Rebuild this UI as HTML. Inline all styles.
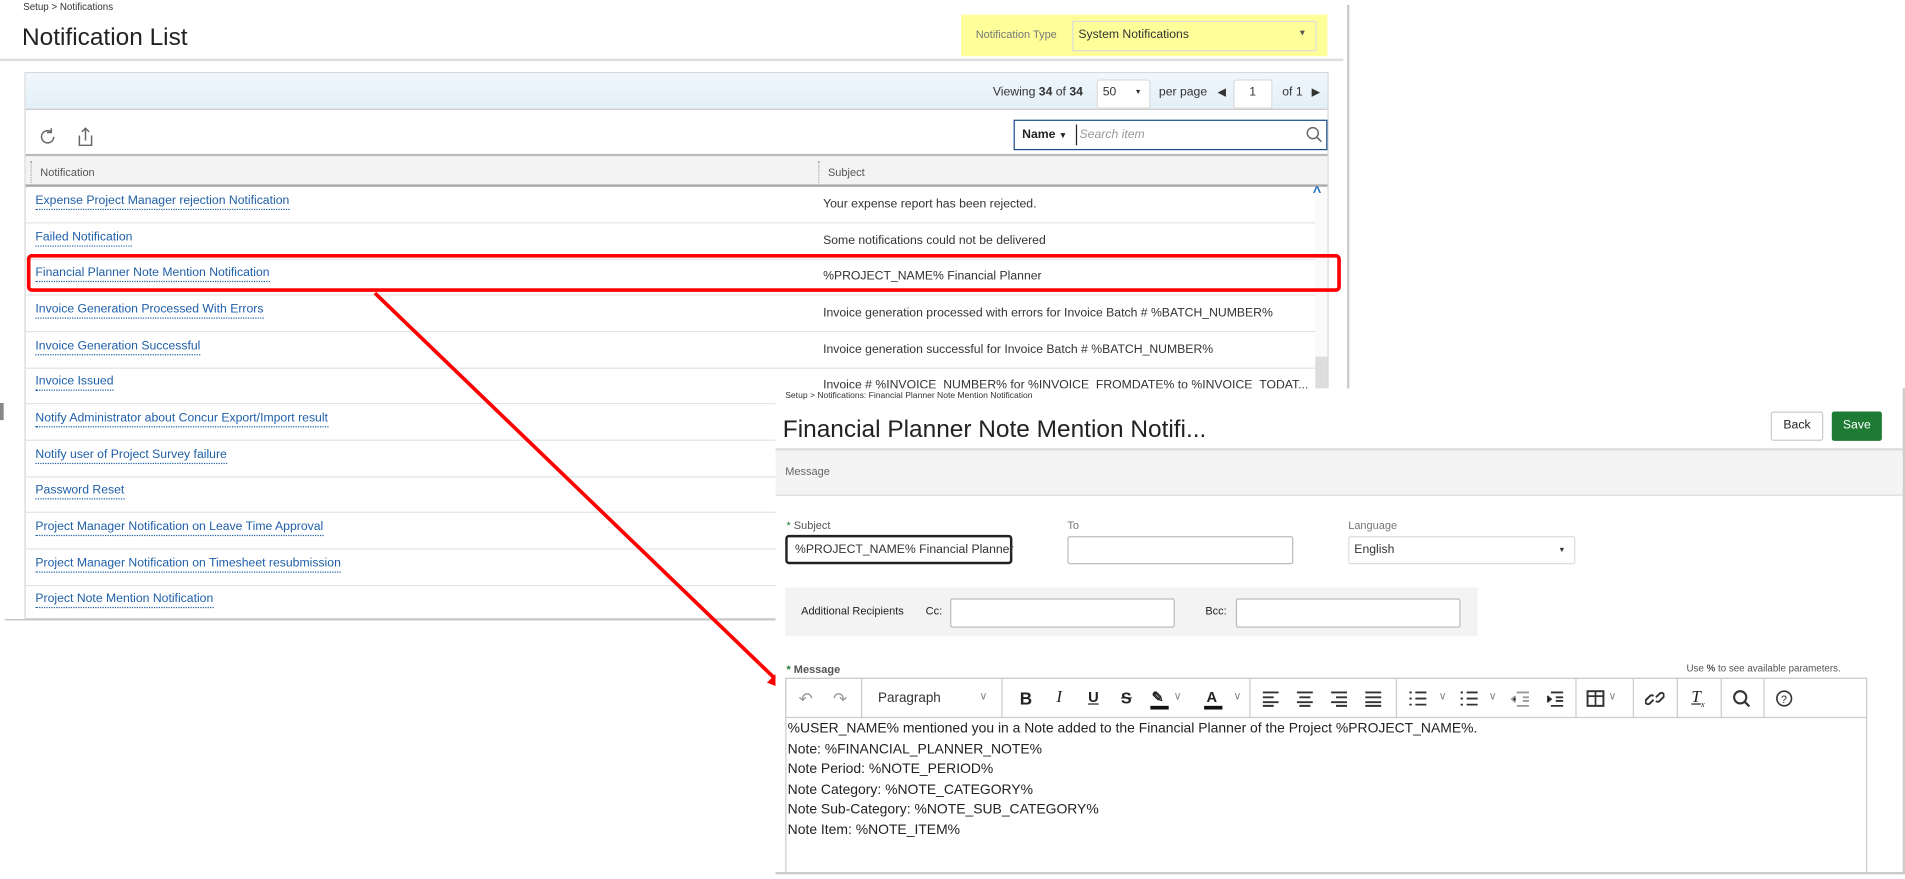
<!DOCTYPE html>
<html><head><meta charset="utf-8"><style>
*{box-sizing:border-box;margin:0;padding:0}
html,body{width:1905px;height:879px;overflow:hidden;background:#fff}
#w{position:absolute;left:0;top:0;width:1560px;height:720px;transform:scale(1.2212);transform-origin:0 0;font-family:"Liberation Sans",sans-serif;color:#333}
.a{position:absolute}
.lnk{color:#1f5fa8;font-size:10px;border-bottom:1px dotted #1f5fa8;line-height:12px}
.sub{font-size:10px;color:#333}
.row{position:absolute;left:21px;width:1056px;height:30px;border-bottom:1px solid #e3e3e3}
.inp{position:absolute;background:#fff;border:1px solid #bbb;border-radius:2px}
.sep{position:absolute;top:0;width:1px;height:32px;background:#ccc}
.tb{position:absolute;top:8px;font-size:14px;color:#222;font-weight:bold}
.chev{position:absolute;top:9px;font-size:9px;color:#888}
.txt{font-family:"Liberation Sans",Arial,sans-serif;font-size:11.4px;color:#222;line-height:16.5px}
</style></head><body><div id="w">
<div class="a" style="left:19px;top:1px;font-size:8px;color:#333">Setup &gt; Notifications</div>
<div class="a" style="left:18px;top:20px;font-size:20px;color:#222">Notification List</div>
<div class="a" style="left:0;top:48px;width:1100px;height:2px;background:#ddd"></div>
<div class="a" style="left:1103px;top:4px;width:2px;height:505px;background:#ccc"></div>
<div class="a" style="left:4px;top:507px;width:1100px;height:1px;background:#bbb"></div>
<div class="a" style="left:787px;top:12px;width:300px;height:34px;background:#ffff99"></div>
<div class="a" style="left:799px;top:23px;font-size:9px;color:#777">Notification Type</div>
<div class="a" style="left:878px;top:17px;width:200px;height:25px;border:1px solid #ddd;background:#ffff99"></div>
<div class="a" style="left:883px;top:23px;font-size:10px;color:#333">System Notifications</div>
<div class="a" style="left:1063px;top:24px;font-size:7px;color:#555">▼</div>

<div class="a" style="left:20px;top:59px;width:1068px;height:448px;border:1px solid #d6d6d6"></div>
<div class="a" style="left:21px;top:60px;width:1066px;height:30px;background:linear-gradient(#f0f7fc,#e3eff8);border-bottom:1px solid #c8c8c8"></div>
<div class="a" style="left:813px;top:70px;font-size:10px;color:#333">Viewing <b>34</b> of <b>34</b></div>
<div class="inp" style="left:898px;top:65px;width:44px;height:24px;border-color:#ddd"></div>
<div class="a" style="left:903px;top:70px;font-size:10px">50</div>
<div class="a" style="left:929px;top:73px;font-size:6px">▼</div>
<div class="a" style="left:949px;top:70px;font-size:10px">per page</div>
<div class="a" style="left:997px;top:70px;font-size:9px">◀</div>
<div class="inp" style="left:1010px;top:65px;width:32px;height:24px;border-color:#ddd"></div>
<div class="a" style="left:1023px;top:70px;font-size:10px">1</div>
<div class="a" style="left:1050px;top:70px;font-size:10px">of 1</div>
<div class="a" style="left:1074px;top:70px;font-size:9px">▶</div>
<div class="a" style="left:21px;top:90px;width:1066px;height:38px;border-bottom:2px solid #bbb"></div>
<svg class="a" style="left:31px;top:104px" width="16" height="16" viewBox="0 0 16 16"><path d="M13 8a5 5 0 1 1-2-4" fill="none" stroke="#666" stroke-width="1.2"/><path d="M11 1v3.5h-3.5" fill="none" stroke="#666" stroke-width="1.2"/></svg>
<svg class="a" style="left:62px;top:103px" width="16" height="18" viewBox="0 0 16 18"><path d="M8 12V2M5 5l3-3 3 3M3 8v8h10V8" fill="none" stroke="#666" stroke-width="1.2"/></svg>
<div class="a" style="left:830px;top:98px;width:257px;height:25px;border:1.5px solid #1a4c8c;background:#fff"></div>
<div class="a" style="left:837px;top:105px;font-size:10px;font-weight:bold;color:#222">Name <span style="font-size:7px">▼</span></div>
<div class="a" style="left:881px;top:102px;width:1px;height:17px;background:#222"></div>
<div class="a" style="left:884px;top:105px;font-size:10px;font-style:italic;color:#999">Search item</div>
<svg class="a" style="left:1069px;top:103px" width="14" height="14"><circle cx="6" cy="6" r="4.5" fill="none" stroke="#666" stroke-width="1.2"/><path d="M9.5 9.5L13 13" stroke="#666" stroke-width="1.3"/></svg>
<div class="a" style="left:21px;top:129px;width:1066px;height:24px;background:#f3f3f3;border-bottom:2px solid #aaa"></div>
<div class="a" style="left:25px;top:132px;width:1px;height:18px;border-left:1px dotted #aaa"></div>
<div class="a" style="left:33px;top:136px;font-size:9px;color:#555">Notification</div>
<div class="a" style="left:670px;top:132px;width:1px;height:18px;border-left:1px dotted #aaa"></div>
<div class="a" style="left:678px;top:136px;font-size:9px;color:#555">Subject</div>

<div class="row" style="top:153px"><span class="a lnk" style="left:8px;top:6px">Expense Project Manager rejection Notification</span><span class="a sub" style="left:653px;top:9px">Your expense report has been rejected.</span></div>
<div class="row" style="top:183px"><span class="a lnk" style="left:8px;top:6px">Failed Notification</span><span class="a sub" style="left:653px;top:9px">Some notifications could not be delivered</span></div>
<div class="row" style="top:212px"><span class="a lnk" style="left:8px;top:6px">Financial Planner Note Mention Notification</span><span class="a sub" style="left:653px;top:9px">%PROJECT_NAME% Financial Planner</span></div>
<div class="row" style="top:242px"><span class="a lnk" style="left:8px;top:6px">Invoice Generation Processed With Errors</span><span class="a sub" style="left:653px;top:9px">Invoice generation processed with errors for Invoice Batch # %BATCH_NUMBER%</span></div>
<div class="row" style="top:272px"><span class="a lnk" style="left:8px;top:6px">Invoice Generation Successful</span><span class="a sub" style="left:653px;top:9px">Invoice generation successful for Invoice Batch # %BATCH_NUMBER%</span></div>
<div class="row" style="top:301px"><span class="a lnk" style="left:8px;top:6px">Invoice Issued</span><span class="a sub" style="left:653px;top:9px">Invoice # %INVOICE_NUMBER% for %INVOICE_FROMDATE% to %INVOICE_TODAT...</span></div>
<div class="row" style="top:331px"><span class="a lnk" style="left:8px;top:6px">Notify Administrator about Concur Export/Import result</span></div>
<div class="row" style="top:361px"><span class="a lnk" style="left:8px;top:6px">Notify user of Project Survey failure</span></div>
<div class="row" style="top:390px"><span class="a lnk" style="left:8px;top:6px">Password Reset</span></div>
<div class="row" style="top:420px"><span class="a lnk" style="left:8px;top:6px">Project Manager Notification on Leave Time Approval</span></div>
<div class="row" style="top:450px"><span class="a lnk" style="left:8px;top:6px">Project Manager Notification on Timesheet resubmission</span></div>
<div class="row" style="top:479px;border:none"><span class="a lnk" style="left:8px;top:6px">Project Note Mention Notification</span></div>
<div class="a" style="left:1077px;top:153px;width:10px;height:353px;background:#fafafa"></div>
<div class="a" style="left:1077px;top:292px;width:10px;height:30px;background:#ddd"></div>
<div class="a" style="left:1075px;top:150px;font-size:12px;color:#1f6fc0;font-weight:bold">^</div>
<div class="a" style="left:0;top:330px;width:3px;height:14px;background:#888"></div>

<div class="a" style="left:22px;top:208px;width:1076px;height:31px;border:3px solid #f00;border-radius:4px"></div>
<svg class="a" style="left:0;top:0" width="700" height="600"><line x1="307" y1="240" x2="636" y2="557" stroke="#f00" stroke-width="3"/><polygon points="646,566 628,559 638,549" fill="#f00"/></svg>

<div class="a" style="left:635px;top:318px;width:925px;height:398px;background:#fff;border-right:2px solid #ccc;border-bottom:2px solid #ccc"></div>
<div class="a" style="left:643px;top:321px;font-size:7px;color:#333">Setup &gt; Notifications: Financial Planner Note Mention Notification</div>
<div class="a" style="left:641px;top:341px;font-size:20px;color:#222">Financial Planner Note Mention Notifi...</div>
<div class="a" style="left:1450px;top:337px;width:43px;height:24px;border:1px solid #ccc;border-radius:2px;background:#fff;font-size:10px;text-align:center;line-height:22px;color:#222">Back</div>
<div class="a" style="left:1500px;top:337px;width:41px;height:24px;background:#1e7b34;border-radius:2px;font-size:10px;text-align:center;line-height:24px;color:#fff">Save</div>
<div class="a" style="left:635px;top:367px;width:923px;height:39px;background:#f4f4f4;border-top:2px solid #ddd;border-bottom:1px solid #ddd"></div>
<div class="a" style="left:643px;top:381px;font-size:9px;color:#666">Message</div>
<div class="a" style="left:644px;top:425px;font-size:9px;color:#555"><span style="color:#1e7b34">*</span> Subject</div>
<div class="a" style="left:643px;top:438px;width:186px;height:24px;border:2px solid #222;border-radius:3px"></div>
<div class="a" style="left:651px;top:445px;font-size:10px;color:#333">%PROJECT_NAME% Financial Planner</div>
<div class="a" style="left:874px;top:425px;font-size:9px;color:#777">To</div>
<div class="inp" style="left:874px;top:439px;width:185px;height:23px"></div>
<div class="a" style="left:1104px;top:425px;font-size:9px;color:#777">Language</div>
<div class="inp" style="left:1104px;top:439px;width:186px;height:23px;border-color:#ddd"></div>
<div class="a" style="left:1109px;top:445px;font-size:10px">English</div>
<div class="a" style="left:1276px;top:448px;font-size:6px">▼</div>
<div class="a" style="left:643px;top:481px;width:567px;height:40px;background:#f3f3f3"></div>
<div class="a" style="left:656px;top:495px;font-size:9px;color:#222">Additional Recipients</div>
<div class="a" style="left:758px;top:495px;font-size:9px;color:#222">Cc:</div>
<div class="inp" style="left:778px;top:490px;width:184px;height:24px"></div>
<div class="a" style="left:987px;top:495px;font-size:9px;color:#222">Bcc:</div>
<div class="inp" style="left:1012px;top:490px;width:184px;height:24px"></div>
<div class="a" style="left:644px;top:543px;font-size:9px;color:#555;font-weight:bold"><span style="color:#1e7b34">*</span> Message</div>
<div class="a" style="left:1381px;top:543px;font-size:8px;color:#555">Use <b>%</b> to see available parameters.</div>
<div class="a" style="left:643px;top:555px;width:886px;height:160px;border:1px solid #ccc;border-bottom:none"></div>
<div class="a" style="left:643px;top:555px;width:886px;height:33px;border:1px solid #ccc">
 <span class="tb" style="left:10px;color:#999;font-weight:normal">↶</span><span class="tb" style="left:38px;color:#999;font-weight:normal">↷</span>
 <div class="sep" style="left:61px"></div>
 <span class="a" style="left:75px;top:10px;font-size:11px;color:#333">Paragraph</span><span class="chev" style="left:158px">∨</span>
 <div class="sep" style="left:176px"></div>
 <span class="tb" style="left:191px">B</span><span class="tb" style="left:221px;font-style:italic;font-weight:normal;font-family:'Liberation Serif',serif">I</span><span class="tb" style="left:247px;text-decoration:underline;font-size:12px">U</span><span class="tb" style="left:274px;text-decoration:line-through;font-size:13px">S</span>
 <span class="tb" style="left:299px;font-size:12px">✎</span><div class="a" style="left:298px;top:22px;width:15px;height:3px;background:#111"></div><span class="chev" style="left:317px">∨</span>
 <span class="tb" style="left:344px;font-size:12px">A</span><div class="a" style="left:342px;top:22px;width:15px;height:3px;background:#111"></div><span class="chev" style="left:366px">∨</span>
 <div class="sep" style="left:379px"></div>
 <svg class="a" style="left:390px;top:9px" width="100" height="14"><g stroke="#333" stroke-width="1.6"><path d="M0 2h13M0 6h9M0 10h13M0 13h9"/><path d="M28 2h13M30 6h9M28 10h13M30 13h9"/><path d="M56 2h13M60 6h9M56 10h13M60 13h9"/><path d="M84 2h13M84 6h13M84 10h13M84 13h13"/></g></svg>
 <div class="sep" style="left:499px"></div>
 <svg class="a" style="left:510px;top:9px" width="130" height="14"><g stroke="#333" stroke-width="1.5"><path d="M0 2h2M5 2h9M0 7h2M5 7h9M0 12h2M5 12h9"/><path d="M42 2h2M47 2h9M42 7h2M47 7h9M42 12h2M47 12h9"/><path d="M88 2h10M93 6h5M93 9h5M88 13h10M87 5l-3 2.5 3 2.5" stroke="#999"/><path d="M116 2h10M120 6h6M120 9h6M116 13h10M113 5l3 2.5-3 2.5"/></g></svg>
 <span class="chev" style="left:534px">∨</span><span class="chev" style="left:575px">∨</span>
 <div class="sep" style="left:646px"></div>
 <svg class="a" style="left:655px;top:9px" width="15" height="14"><rect x="1" y="1" width="13" height="12" fill="none" stroke="#333" stroke-width="1.6"/><path d="M1 5h13M7.5 1v12" stroke="#333" stroke-width="1.4"/></svg><span class="chev" style="left:673px">∨</span>
 <div class="sep" style="left:693px"></div>
 <svg class="a" style="left:703px;top:8px" width="16" height="16"><g fill="none" stroke="#333" stroke-width="1.6"><path d="M7 9l-3 3a2 2 0 0 1-3-3l3-3a2 2 0 0 1 3 0"/><path d="M9 7l3-3a2 2 0 0 1 3 3l-3 3a2 2 0 0 1-3 0"/></g></svg>
 <div class="sep" style="left:729px"></div>
 <span class="tb" style="left:741px;font-style:italic;font-family:'Liberation Serif',serif;font-weight:normal;text-decoration:underline">T<sub style="font-size:7px">x</sub></span>
 <div class="sep" style="left:765px"></div>
 <svg class="a" style="left:774px;top:8px" width="16" height="16"><circle cx="7" cy="7" r="5" fill="none" stroke="#333" stroke-width="1.7"/><path d="M10.5 10.5l4 4" stroke="#333" stroke-width="1.8"/></svg>
 <div class="sep" style="left:800px"></div>
 <svg class="a" style="left:810px;top:9px" width="14" height="14"><circle cx="7" cy="7" r="6" fill="none" stroke="#333" stroke-width="1.3"/><text x="4.3" y="10.5" font-size="9" font-family="Liberation Sans" fill="#333">?</text></svg>
</div>
<div class="a txt" style="left:645px;top:589px">%USER_NAME% mentioned you in a Note added to the Financial Planner of the Project %PROJECT_NAME%.<br>Note: %FINANCIAL_PLANNER_NOTE%<br>Note Period: %NOTE_PERIOD%<br>Note Category: %NOTE_CATEGORY%<br>Note Sub-Category: %NOTE_SUB_CATEGORY%<br>Note Item: %NOTE_ITEM%</div>
</div></body></html>
